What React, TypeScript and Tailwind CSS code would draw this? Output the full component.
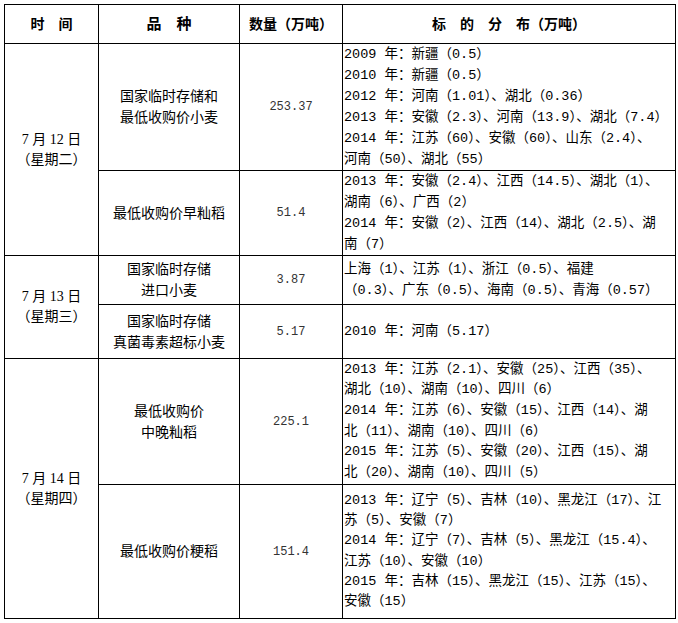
const CJK = '"Liberation Serif", "Noto Sans CJK SC", serif'
const DIST = '"Liberation Mono", "Noto Sans CJK SC", monospace'

type Row = {
  date?: { day: string; week: string; span: number }
  kind: string[]
  qty: string
  dist: string[]
  h: string
  lead: string
}

const ROWS: Row[] = [
  {
    date: { day: '7 月 12 日', week: '（星期二）', span: 2 },
    kind: ['国家临时存储和', '最低收购价小麦'],
    qty: '253.37',
    dist: [
      '2009 年：新疆（0.5）',
      '2010 年：新疆（0.5）',
      '2012 年：河南（1.01）、湖北（0.36）',
      '2013 年：安徽（2.3）、河南（13.9）、湖北（7.4）',
      '2014 年：江苏（60）、安徽（60）、山东（2.4）、',
      '河南（50）、湖北（55）',
    ],
    h: 'h-[125px]',
    lead: 'leading-[21px]',
  },
  {
    kind: ['最低收购价早籼稻'],
    qty: '51.4',
    dist: [
      '2013 年：安徽（2.4）、江西（14.5）、湖北（1）、',
      '湖南（6）、广西（2）',
      '2014 年：安徽（2）、江西（14）、湖北（2.5）、湖',
      '南（7）',
    ],
    h: 'h-[83px]',
    lead: 'leading-[21px]',
  },
  {
    date: { day: '7 月 13 日', week: '（星期三）', span: 2 },
    kind: ['国家临时存储', '进口小麦'],
    qty: '3.87',
    dist: [
      '上海（1）、江苏（1）、浙江（0.5）、福建',
      '（0.3）、广东（0.5）、海南（0.5）、青海（0.57）',
    ],
    h: 'h-[49px]',
    lead: 'leading-[21px]',
  },
  {
    kind: ['国家临时存储', '真菌毒素超标小麦'],
    qty: '5.17',
    dist: ['2010 年：河南（5.17）'],
    h: 'h-[54px]',
    lead: 'leading-[21px]',
  },
  {
    date: { day: '7 月 14 日', week: '（星期四）', span: 2 },
    kind: ['最低收购价', '中晚籼稻'],
    qty: '225.1',
    dist: [
      '2013 年：江苏（2.1）、安徽（25）、江西（35）、',
      '湖北（10）、湖南（10）、四川（6）',
      '2014 年：江苏（6）、安徽（15）、江西（14）、湖',
      '北（11）、湖南（10）、四川（6）',
      '2015 年：江苏（5）、安徽（20）、江西（15）、湖',
      '北（20）、湖南（10）、四川（5）',
    ],
    h: 'h-[126px]',
    lead: 'leading-[20.6px]',
  },
  {
    kind: ['最低收购价粳稻'],
    qty: '151.4',
    dist: [
      '2013 年：辽宁（5）、吉林（10）、黑龙江（17）、江',
      '苏（5）、安徽（7）',
      '2014 年：辽宁（7）、吉林（5）、黑龙江（15.4）、',
      '江苏（10）、安徽（10）',
      '2015 年：吉林（15）、黑龙江（15）、江苏（15）、',
      '安徽（15）',
    ],
    h: 'h-[134px]',
    lead: 'leading-[20.2px]',
  },
]

export default function App() {
  return (
    <div className="w-[678px] h-[623px] bg-white pt-[4px] pl-[4px] text-black" style={{ fontFamily: CJK }}>
      <table className="table-fixed border-collapse w-[671px]">
        <colgroup>
          <col className="w-[94px]" />
          <col className="w-[141px]" />
          <col className="w-[103px]" />
          <col className="w-[333px]" />
        </colgroup>
        <thead>
          <tr className="h-[39px]">
            <th className="border border-black text-[14px] font-bold text-center align-middle">时　间</th>
            <th className="border border-black text-[15px] font-bold text-center align-middle">品　种</th>
            <th className="border border-black text-[14px] font-bold text-center align-middle">数量（万吨）</th>
            <th className="border border-black text-[14px] font-bold text-center align-middle">标　的　分　布（万吨）</th>
          </tr>
        </thead>
        <tbody>
          {ROWS.map((r, i) => (
            <tr key={i} className={r.h}>
              {r.date && (
                <td rowSpan={r.date.span} className="border border-black text-center align-middle text-[14px] leading-[20px]">
                  <div>{r.date.day}</div>
                  <div>{r.date.week}</div>
                </td>
              )}
              <td className="border border-black text-center align-middle text-[14px] leading-[21px]">
                {r.kind.map((k) => (
                  <div key={k}>{k}</div>
                ))}
              </td>
              <td
                className="border border-black text-center align-middle text-[12px] text-[#333]"
                style={{ fontFamily: '"Liberation Mono", monospace' }}
              >
                {r.qty}
              </td>
              <td
                className={`border border-black align-middle text-[13.5px] pl-px whitespace-nowrap overflow-hidden ${r.lead}`}
                style={{ fontFamily: DIST }}
              >
                {r.dist.map((d) => (
                  <div key={d}>{d}</div>
                ))}
              </td>
            </tr>
          ))}
        </tbody>
      </table>
    </div>
  )
}
